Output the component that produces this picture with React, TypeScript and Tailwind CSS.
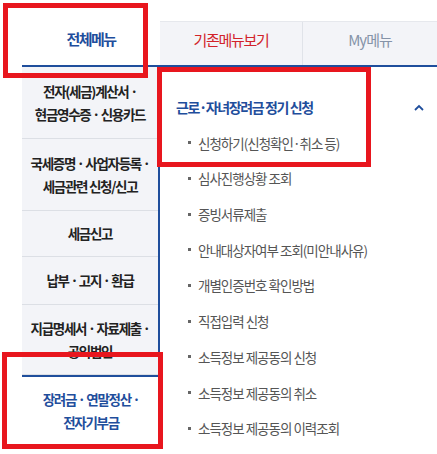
import React from 'react';

const sideItems = [
  { lines: ['전자(세금)계산서 ·', '현금영수증 · 신용카드'], h: 'h-[72px]' },
  { lines: ['국세증명 · 사업자등록 ·', '세금관련 신청/신고'], h: 'h-[72px]' },
  { lines: ['세금신고'], h: 'h-[46px]' },
  { lines: ['납부 · 고지 · 환급'], h: 'h-[48px]' },
  { lines: ['지급명세서 · 자료제출 ·', '공익법인'], h: 'h-[70px]' },
];

const subItems = [
  '신청하기(신청확인·취소 등)',
  '심사진행상황 조회',
  '증빙서류제출',
  '안내대상자여부 조회(미안내사유)',
  '개별인증번호 확인방법',
  '직접입력 신청',
  '소득정보 제공동의 신청',
  '소득정보 제공동의 취소',
  '소득정보 제공동의 이력조회',
];

function ChevronUp() {
  return (
    <svg width="10" height="7" viewBox="0 0 10 7" fill="none">
      <path d="M1 6L5 2L9 6" stroke="#1f4e9c" strokeWidth="1.8" />
    </svg>
  );
}

export default function App() {
  return (
    <div
      className="relative w-[437px] h-[454px] overflow-hidden bg-white"
      style={{ fontFamily: '"Noto Sans CJK KR", "Noto Sans", sans-serif' }}
    >
      <div className="flex pl-[22px]">
        {/* left column */}
        <div className="w-[138px] shrink-0">
          <div className="h-[67px] border-b-2 border-[#1f4e9c] pt-[29px] text-center text-[15px] leading-[20px] font-bold tracking-[-1.5px] text-[#1f4e9c]">
            전체메뉴
          </div>
          <div className="border-r-2 border-[#1f4e9c] bg-[#f3f4f8]">
            {sideItems.map((it, i) => (
              <div
                key={i}
                className={`${it.h} flex flex-col items-center justify-center border-b border-[#dcdfe5] text-[13.5px] leading-[23px] font-bold tracking-[-1.3px] text-[#222]`}
              >
                {it.lines.map((l) => (
                  <span key={l}>{l}</span>
                ))}
              </div>
            ))}
          </div>
          <div className="h-[71px] flex flex-col items-center justify-center border-y-2 border-[#1f4e9c] bg-white text-[13.5px] leading-[23px] font-bold tracking-[-1.3px] text-[#1f4e9c]">
            <span>장려금 · 연말정산 ·</span>
            <span>전자기부금</span>
          </div>
        </div>

        {/* right column */}
        <div className="flex-1">
          <div className="mt-[21px] flex h-[46px] border-b-2 border-[#1f4e9c] border-t border-t-[#e6e8ed] bg-[#f3f4f8]">
            <div className="w-[142px] pt-[8px] text-center text-[15px] leading-[20px] tracking-[-1.3px] text-[#d2232a]">
              기존메뉴보기
            </div>
            <div className="flex-1 border-l border-[#e0e3e9] pt-[8px] text-center text-[15px] leading-[20px] tracking-[-1px] text-[#8593a8]">
              My메뉴
            </div>
          </div>
          <div className="pl-[16px] pr-[13px] pt-[30px]">
            <div className="flex items-center justify-between h-[20px]">
              <span className="text-[14px] font-bold tracking-[-1.4px] text-[#1f4e9c]">
                근로·자녀장려금 정기 신청
              </span>
              <ChevronUp />
            </div>
            <ul className="mt-[8px]">
              {subItems.map((s) => (
                <li key={s} className="flex items-center h-[35.7px] pl-[12px] text-[13.5px] tracking-[-1px] text-[#555]">
                  <span className="w-[3px] h-[3px] bg-[#666] mr-[7px] shrink-0" />
                  {s}
                </li>
              ))}
            </ul>
          </div>
        </div>
      </div>

      {/* red annotation boxes */}
      <div className="absolute left-[3px] top-[3px] w-[145px] h-[75px] border-[5px] border-[#e8161e]" />
      <div className="absolute left-[157px] top-[67px] w-[214px] h-[100px] border-[5px] border-[#e8161e]" />
      <div className="absolute left-[2px] top-[352px] w-[161px] h-[97px] border-[5px] border-[#e8161e]" />
    </div>
  );
}
